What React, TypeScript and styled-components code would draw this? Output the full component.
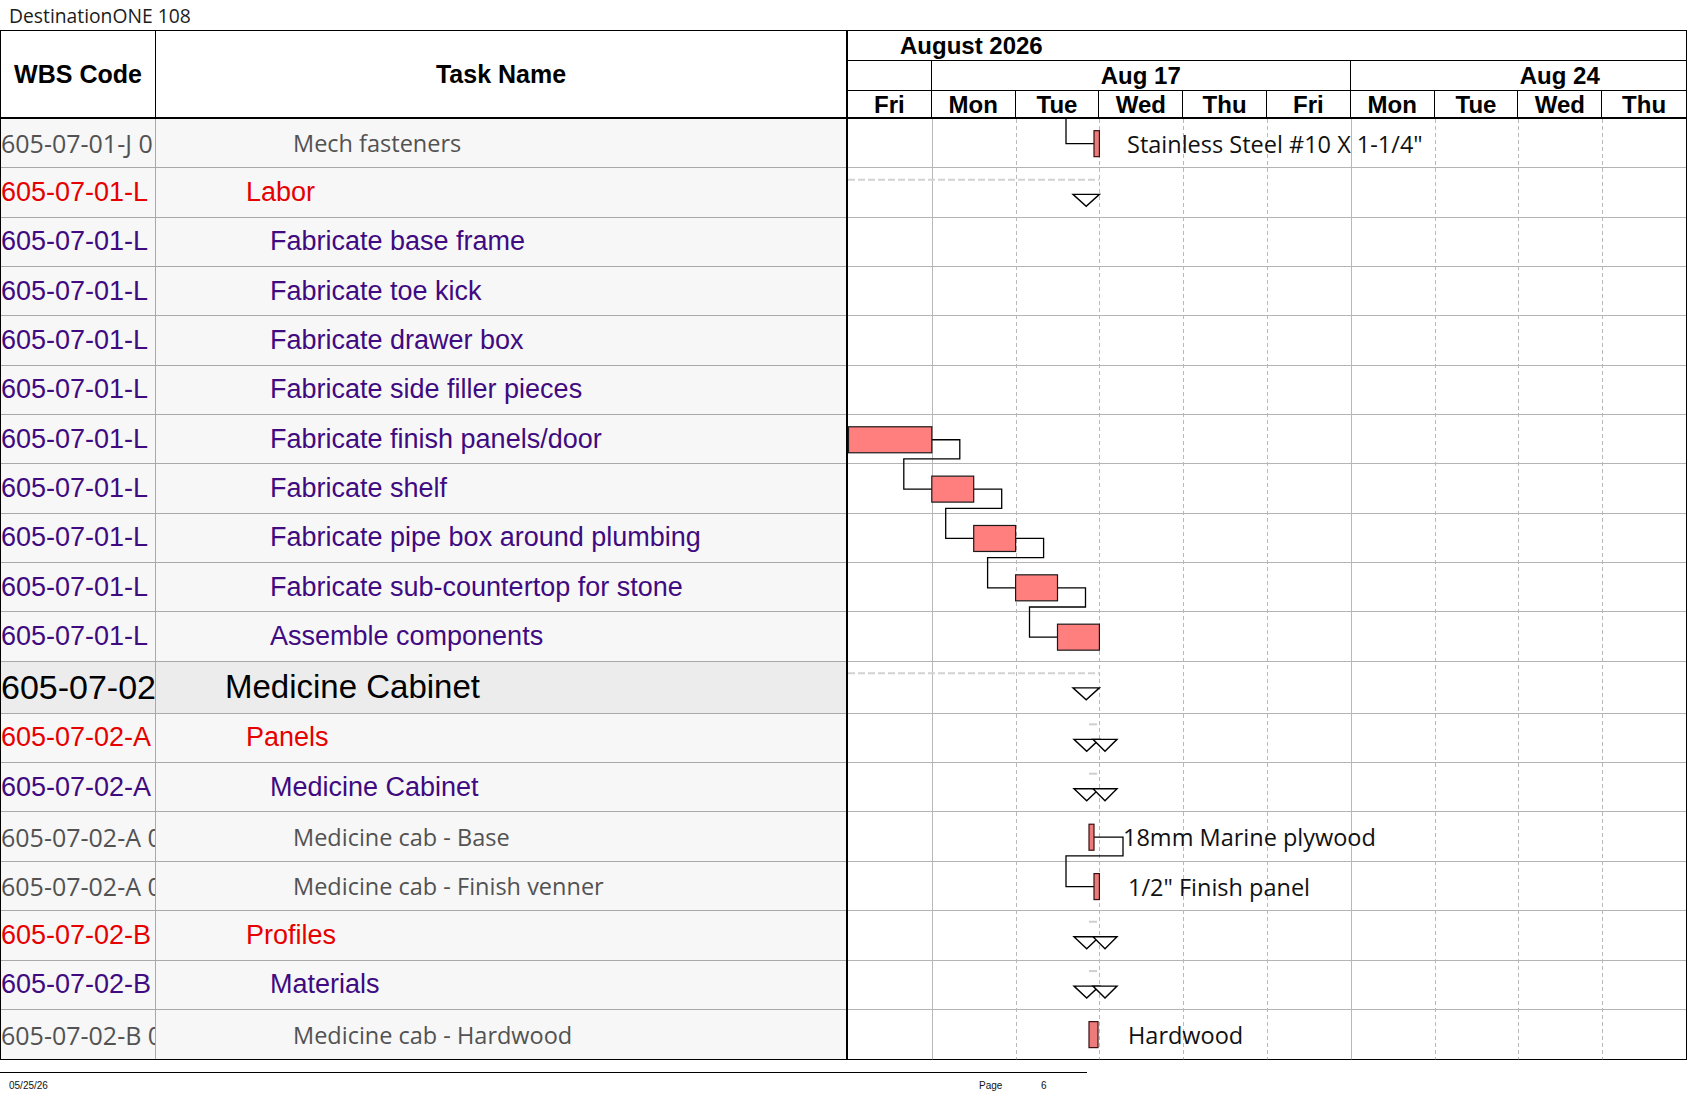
import React from "react"
import styled, { createGlobalStyle } from "styled-components"

const DAY = 83.8
const ROW_H = 49.35
const BIG_H = 52
const CHART_W = 838
const WED = DAY * 3

type Kind = "note" | "group" | "task" | "summary"

interface TaskRow {
  wbs: string
  name: string
  kind: Kind
}

const rows: TaskRow[] = [
  { wbs: "605-07-01-J 01", name: "Mech fasteners", kind: "note" },
  { wbs: "605-07-01-L", name: "Labor", kind: "group" },
  { wbs: "605-07-01-L", name: "Fabricate base frame", kind: "task" },
  { wbs: "605-07-01-L", name: "Fabricate toe kick", kind: "task" },
  { wbs: "605-07-01-L", name: "Fabricate drawer box", kind: "task" },
  { wbs: "605-07-01-L", name: "Fabricate side filler pieces", kind: "task" },
  { wbs: "605-07-01-L", name: "Fabricate finish panels/door", kind: "task" },
  { wbs: "605-07-01-L", name: "Fabricate shelf", kind: "task" },
  { wbs: "605-07-01-L", name: "Fabricate pipe box around plumbing", kind: "task" },
  { wbs: "605-07-01-L", name: "Fabricate sub-countertop for stone", kind: "task" },
  { wbs: "605-07-01-L", name: "Assemble components", kind: "task" },
  { wbs: "605-07-02", name: "Medicine Cabinet", kind: "summary" },
  { wbs: "605-07-02-A", name: "Panels", kind: "group" },
  { wbs: "605-07-02-A", name: "Medicine Cabinet", kind: "task" },
  { wbs: "605-07-02-A 01", name: "Medicine cab - Base", kind: "note" },
  { wbs: "605-07-02-A 02", name: "Medicine cab - Finish venner", kind: "note" },
  { wbs: "605-07-02-B", name: "Profiles", kind: "group" },
  { wbs: "605-07-02-B", name: "Materials", kind: "task" },
  { wbs: "605-07-02-B 01", name: "Medicine cab - Hardwood", kind: "note" }
]

const kindStyle: Record<
  Kind,
  { color: string; font: string; size: number; codeSize: number; indent: number }
> = {
  note: {
    color: "#525252",
    font: `"Open Sans", "Liberation Sans", sans-serif`,
    size: 23.5,
    codeSize: 25,
    indent: 137
  },
  group: {
    color: "#e60000",
    font: `"Liberation Sans", Arial, sans-serif`,
    size: 27,
    codeSize: 27,
    indent: 90
  },
  task: {
    color: "#400a80",
    font: `"Liberation Sans", Arial, sans-serif`,
    size: 27,
    codeSize: 27,
    indent: 114
  },
  summary: {
    color: "#000",
    font: `"Liberation Sans", Arial, sans-serif`,
    size: 33,
    codeSize: 34,
    indent: 69
  }
}

const heights = rows.map(r => (r.kind === "summary" ? BIG_H : ROW_H))
const tops = heights.reduce<number[]>(
  (acc, h, i) => [...acc, i === 0 ? 0 : acc[i - 1] + heights[i - 1]],
  []
)
const bodyHeight = tops[tops.length - 1] + heights[heights.length - 1]
const mid = (i: number) => tops[i] + heights[i] / 2

const days = ["Fri", "Mon", "Tue", "Wed", "Thu", "Fri", "Mon", "Tue", "Wed", "Thu"]

// bars: row index, start and end in chart px
const bars = [
  { row: 0, x1: 246, x2: WED, thin: true },
  { row: 6, x1: 0.5, x2: DAY, thin: false },
  { row: 7, x1: DAY, x2: DAY * 1.5, thin: false },
  { row: 8, x1: DAY * 1.5, x2: DAY * 2, thin: false },
  { row: 9, x1: DAY * 2, x2: DAY * 2.5, thin: false },
  { row: 10, x1: DAY * 2.5, x2: WED, thin: false },
  { row: 14, x1: 241, x2: 246, thin: true },
  { row: 15, x1: 246, x2: WED, thin: true },
  { row: 18, x1: 241, x2: 250, thin: true }
]

const waterfall = (a: (typeof bars)[0], b: (typeof bars)[0], out = 28) =>
  `M ${a.x2} ${mid(a.row)} H ${a.x2 + out} V ${tops[b.row] - 5.5} H ${
    b.x1 - 28
  } V ${mid(b.row)} H ${b.x1}`

const links = [
  `M 218 0 V ${mid(0)} H 246`,
  waterfall(bars[1], bars[2]),
  waterfall(bars[2], bars[3]),
  waterfall(bars[3], bars[4]),
  waterfall(bars[4], bars[5]),
  `M 246 ${mid(14)} H 275 V ${tops[15] - 6} H 218 V ${mid(15)} H 246`
]

const summaryRows = [1, 11]
const doubleRows = [12, 13, 16, 17]

const labels = [
  { row: 0, x: 279, text: "Stainless Steel #10 X 1-1/4\"" },
  { row: 14, x: 275, text: "18mm Marine plywood" },
  { row: 15, x: 280, text: "1/2\" Finish panel" },
  { row: 18, x: 280, text: "Hardwood" }
]

const tri = (x1: number, x2: number, y: number) =>
  `${x1},${y} ${x2},${y} ${(x1 + x2) / 2},${y + 12}`

const App: React.FC = () => (
  <Page>
    <GlobalStyle />
    <Title>DestinationONE 108</Title>
    <Sheet>
      <HeaderRow>
        <HeadCell>WBS Code</HeadCell>
        <HeadCell $thick={true}>Task Name</HeadCell>
        <GanttHead>
          <MonthRow>August 2026</MonthRow>
          <WeekRow>
            <WeekCell $w={DAY} />
            <WeekCell $w={DAY * 5}>Aug 17</WeekCell>
            <WeekCell $w={DAY * 5}>Aug 24</WeekCell>
          </WeekRow>
          <DayRow>
            {days.map((d, i) => (
              <DayCell key={i}>{d}</DayCell>
            ))}
          </DayRow>
        </GanttHead>
      </HeaderRow>
      <Body>
        <TaskTable>
          {rows.map((r, i) => (
            <LeftRow key={i} $h={heights[i]} $summary={r.kind === "summary"}>
              <WbsCell $kind={r.kind}>{r.wbs}</WbsCell>
              <NameCell $kind={r.kind}>{r.name}</NameCell>
            </LeftRow>
          ))}
        </TaskTable>
        <Chart>
          {rows.map((r, i) => (
            <ChartRow key={i} $h={heights[i]} />
          ))}
          <Overlay
            width={CHART_W}
            height={bodyHeight}
            viewBox={`0 0 ${CHART_W} ${bodyHeight}`}
          >
            {days.slice(1).map((_, k) => {
              const x = Math.round((k + 1) * DAY) + 0.5
              const solid = k + 1 === 1 || k + 1 === 6
              return (
                <line
                  key={k}
                  x1={x}
                  x2={x}
                  y1={0}
                  y2={bodyHeight}
                  stroke="#b8b8b8"
                  strokeWidth={1}
                  strokeDasharray={solid ? undefined : "4 3"}
                />
              )
            })}
            {summaryRows.map(i => (
              <line
                key={`base${i}`}
                x1={0}
                x2={WED}
                y1={tops[i] + 11.5}
                y2={tops[i] + 11.5}
                stroke="#d2d2d2"
                strokeWidth={2}
                strokeDasharray="7 3"
              />
            ))}
            {doubleRows.map(i => (
              <line
                key={`dash${i}`}
                x1={241}
                x2={249}
                y1={tops[i] + 10.5}
                y2={tops[i] + 10.5}
                stroke="#cfcfcf"
                strokeWidth={2}
              />
            ))}
            {links.map((d, i) => (
              <path key={i} d={d} fill="none" stroke="#000" strokeWidth={1.3} />
            ))}
            {bars.map((b, i) => (
              <rect
                key={i}
                x={b.x1}
                y={mid(b.row) - 13}
                width={b.x2 - b.x1}
                height={26}
                fill={b.thin ? "#ee7b7b" : "#ff7f7f"}
                stroke={b.thin ? "#3a1010" : "#1a1a1a"}
                strokeWidth={1.2}
              />
            ))}
            {summaryRows.map(i => (
              <polygon
                key={`s${i}`}
                points={tri(225, WED, tops[i] + 26)}
                fill="#fff"
                stroke="#000"
                strokeWidth={1.4}
              />
            ))}
            {doubleRows.map(i => (
              <g key={`d${i}`}>
                <polygon
                  points={tri(226, WED, tops[i] + 25.5)}
                  fill="#fff"
                  stroke="#000"
                  strokeWidth={1.4}
                />
                <polygon
                  points={tri(245, 269, tops[i] + 25.5)}
                  fill="#fff"
                  stroke="#000"
                  strokeWidth={1.4}
                />
              </g>
            ))}
          </Overlay>
          {labels.map(l => (
            <BarLabel
              key={l.row}
              style={{ left: l.x, top: tops[l.row], height: heights[l.row] }}
            >
              {l.text}
            </BarLabel>
          ))}
        </Chart>
      </Body>
    </Sheet>
    <Footer>
      <FooterText>05/25/26</FooterText>
      <FooterText>Page</FooterText>
      <FooterText>6</FooterText>
    </Footer>
  </Page>
)

const GlobalStyle = createGlobalStyle`
  html, body {
    margin: 0;
    padding: 0;
    background: #fff;
  }
  body {
    font-family: "Liberation Sans", Arial, sans-serif;
    color: #000;
  }
`

const Page = styled.div`
  width: 1687px;
  height: 1097px;
  overflow: hidden;
  background: #fff;
`

const Title = styled.div`
  height: 30px;
  padding-left: 9px;
  font-family: "Open Sans", "Liberation Sans", sans-serif;
  font-size: 19.3px;
  line-height: 31px;
  color: #1c1c1c;
`

const Sheet = styled.div`
  width: 1687px;
  box-sizing: border-box;
  border: 1px solid #000;
`

const HeaderRow = styled.div`
  display: grid;
  grid-template-columns: 155px 692px 838px;
  height: 88px;
  box-sizing: border-box;
  border-bottom: 2px solid #000;
`

const HeadCell = styled.div<{ $thick?: boolean }>`
  display: flex;
  align-items: center;
  justify-content: center;
  font-size: 25px;
  font-weight: bold;
  border-right: ${p => (p.$thick ? 2 : 1)}px solid #000;
`

const GanttHead = styled.div`
  display: flex;
  flex-direction: column;
  overflow: hidden;
  font-size: 24px;
  font-weight: bold;
`

const MonthRow = styled.div`
  height: 30px;
  box-sizing: border-box;
  border-bottom: 1px solid #000;
  padding-left: 52px;
  line-height: 30px;
`

const WeekRow = styled.div`
  display: flex;
  height: 30px;
  box-sizing: border-box;
  border-bottom: 1px solid #000;
`

const WeekCell = styled.div<{ $w: number }>`
  flex: 0 0 ${p => p.$w}px;
  box-sizing: border-box;
  border-right: 1px solid #000;
  text-align: center;
  line-height: 30px;
`

const DayRow = styled.div`
  display: grid;
  grid-template-columns: repeat(10, 1fr);
  height: 26px;
`

const DayCell = styled.div`
  border-right: 1px solid #000;
  text-align: center;
  line-height: 27px;
  &:last-child {
    border-right: none;
  }
`

const Body = styled.div`
  display: flex;
`

const TaskTable = styled.div`
  flex: 0 0 847px;
  box-sizing: border-box;
  border-right: 2px solid #000;
`

const LeftRow = styled.div<{ $h: number; $summary: boolean }>`
  display: grid;
  grid-template-columns: 155px 1fr;
  height: ${p => p.$h}px;
  box-sizing: border-box;
  border-bottom: 1px solid #a9a9a9;
  background: ${p => (p.$summary ? "#ececec" : "#f7f7f7")};
  &:last-child {
    border-bottom: none;
  }
`

const WbsCell = styled.div<{ $kind: Kind }>`
  display: flex;
  align-items: center;
  overflow: hidden;
  white-space: nowrap;
  border-right: 1px solid #a9a9a9;
  color: ${p => kindStyle[p.$kind].color};
  font-family: ${p => kindStyle[p.$kind].font};
  font-size: ${p => kindStyle[p.$kind].codeSize}px;
`

const NameCell = styled.div<{ $kind: Kind }>`
  display: flex;
  align-items: center;
  white-space: nowrap;
  overflow: hidden;
  padding-left: ${p => kindStyle[p.$kind].indent}px;
  color: ${p => kindStyle[p.$kind].color};
  font-family: ${p => kindStyle[p.$kind].font};
  font-size: ${p => kindStyle[p.$kind].size}px;
`

const Chart = styled.div`
  position: relative;
  flex: 0 0 ${CHART_W}px;
  background: #fff;
`

const ChartRow = styled.div<{ $h: number }>`
  height: ${p => p.$h}px;
  box-sizing: border-box;
  border-bottom: 1px solid #b4b4b4;
  &:last-of-type {
    border-bottom: none;
  }
`

const Overlay = styled.svg`
  position: absolute;
  top: 0;
  left: 0;
  overflow: visible;
`

const BarLabel = styled.span`
  position: absolute;
  display: flex;
  align-items: center;
  white-space: nowrap;
  font-family: "Open Sans", "Liberation Sans", sans-serif;
  font-size: 23.5px;
  color: #111;
`

const Footer = styled.div`
  display: grid;
  grid-template-columns: 970px 62px 1fr;
  width: 1087px;
  box-sizing: border-box;
  margin-top: 12px;
  padding: 7px 0 0 9px;
  border-top: 1px solid #000;
`

const FooterText = styled.span`
  font-family: "Liberation Sans", Arial, sans-serif;
  font-size: 10px;
  color: #111;
`

export default App
